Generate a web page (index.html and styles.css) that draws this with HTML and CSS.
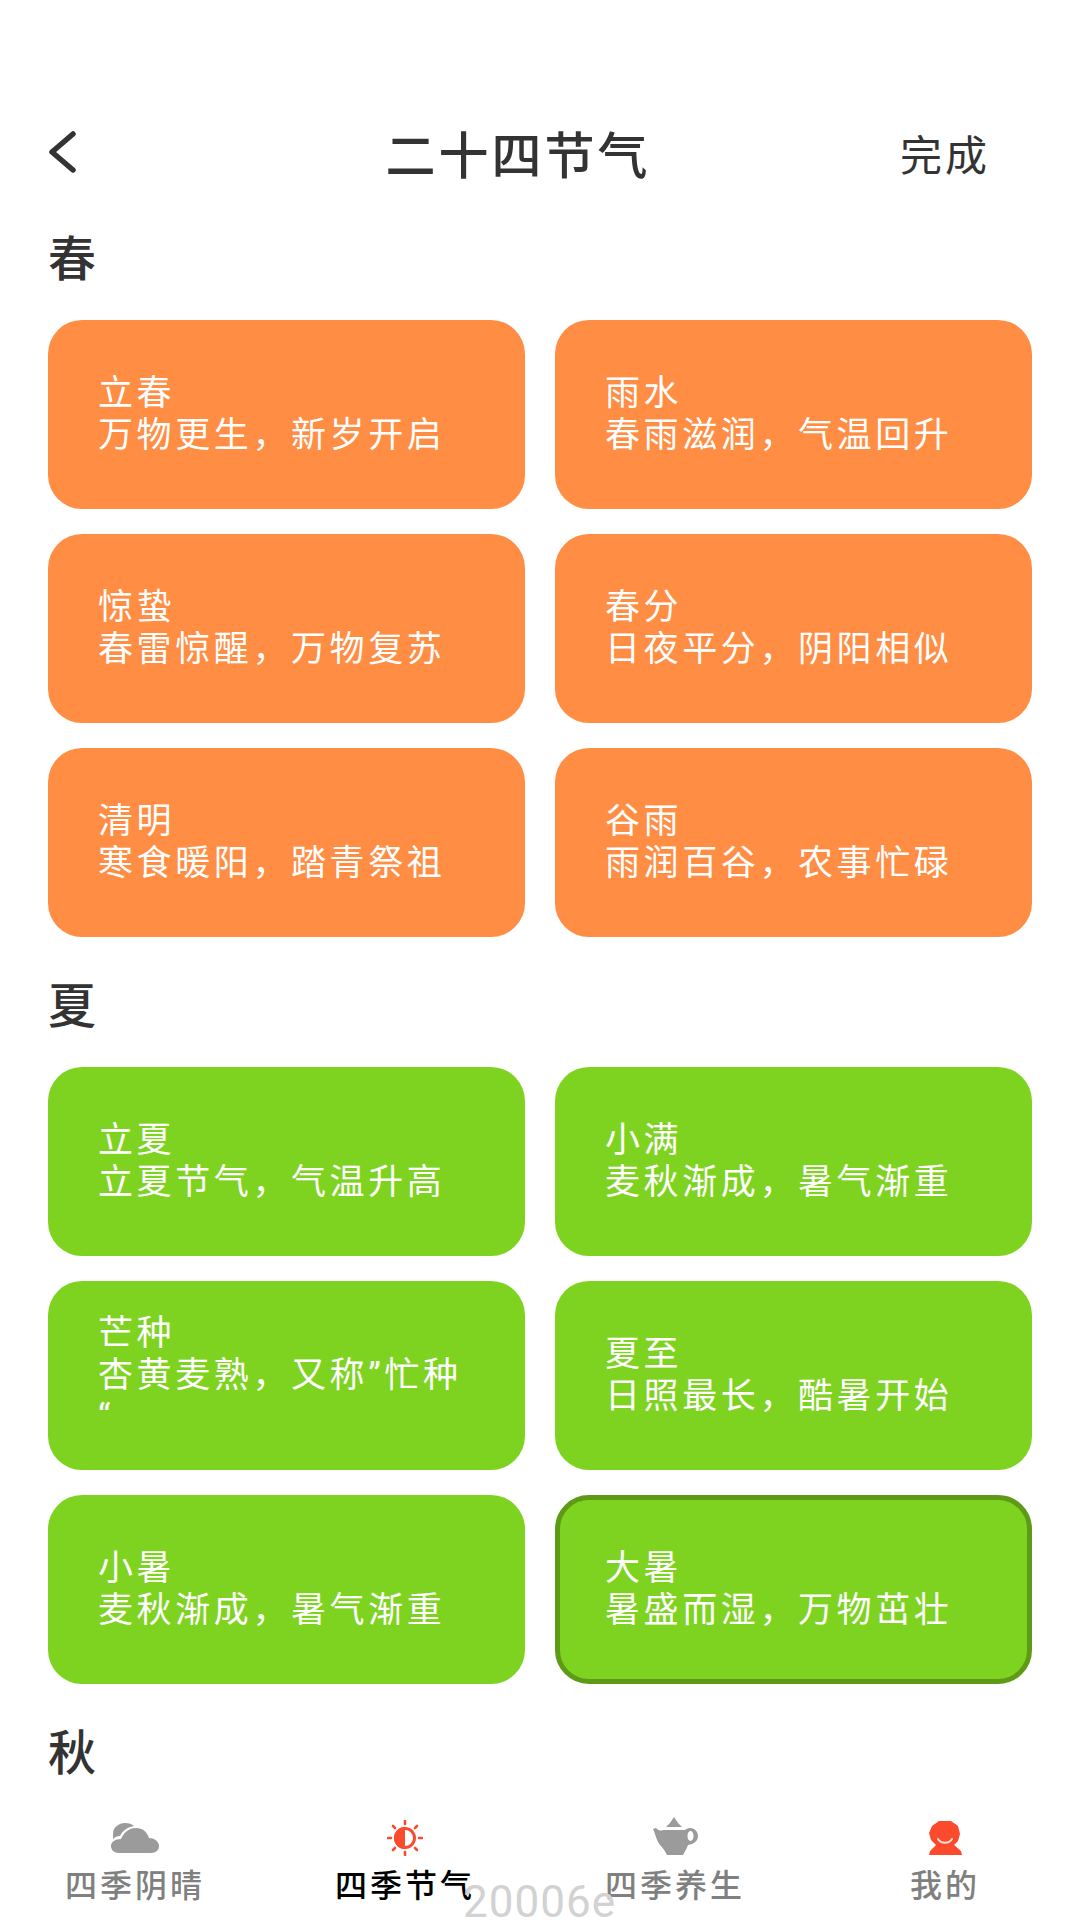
FILE: index.html
```html
<!DOCTYPE html>
<html lang="zh-CN">
<head>
    <meta charset="UTF-8">
    <meta name="viewport" content="width=device-width, initial-scale=1.0">
    <title>二十四节气</title>
    <link rel="stylesheet" href="styles.css">
</head>
<body>
<div class="page">
    <header class="topbar">
        <div class="topbar-left">
            <svg class="back" width="32" height="42" viewBox="0 0 32 42"><path d="M27 3 L6 21 L27 39" fill="none" stroke="#333" stroke-width="5.5" stroke-linecap="round" stroke-linejoin="round"/></svg>
        </div>
        <h1>二十四节气</h1>
        <div class="topbar-right">完成</div>
    </header>

    <main class="content">
        <section class="season">
            <h2>春</h2>
            <div class="grid">
                <div class="card spring"><span>立春</span><span>万物更生，新岁开启</span></div>
                <div class="card spring"><span>雨水</span><span>春雨滋润，气温回升</span></div>
                <div class="card spring"><span>惊蛰</span><span>春雷惊醒，万物复苏</span></div>
                <div class="card spring"><span>春分</span><span>日夜平分，阴阳相似</span></div>
                <div class="card spring"><span>清明</span><span>寒食暖阳，踏青祭祖</span></div>
                <div class="card spring"><span>谷雨</span><span>雨润百谷，农事忙碌</span></div>
            </div>
        </section>
        <section class="season">
            <h2>夏</h2>
            <div class="grid">
                <div class="card summer"><span>立夏</span><span>立夏节气，气温升高</span></div>
                <div class="card summer"><span>小满</span><span>麦秋渐成，暑气渐重</span></div>
                <div class="card summer"><span>芒种</span><span>杏黄麦熟，又称”忙种“</span></div>
                <div class="card summer"><span>夏至</span><span>日照最长，酷暑开始</span></div>
                <div class="card summer"><span>小暑</span><span>麦秋渐成，暑气渐重</span></div>
                <div class="card summer selected"><span>大暑</span><span>暑盛而湿，万物茁壮</span></div>
            </div>
        </section>
        <section class="season">
            <h2>秋</h2>
        </section>
    </main>

    <nav class="tabbar">
        <div class="tab">
            <svg width="50" height="36" viewBox="0 0 50 36">
                <path d="M3 14 C3 7 9 3 15 3 C19 3 22 4 24 6 C18 7 13 10 10 16 C7 16 5 17 3 19 Z" fill="#9b9b9b"/>
                <path d="M9 33 C3 33 1 29 1 26 C1 22 5 19 11 19 C14 12 19 8 26 8 C33 8 37 12 39 18 C45 18 49 22 49 26 C49 30 46 33 41 33 Z" fill="#9b9b9b"/>
            </svg>
            <span>四季阴晴</span>
        </div>
        <div class="tab active">
            <svg width="36" height="36" viewBox="0 0 36 36">
                <circle cx="18" cy="18" r="9.5" fill="#fff" stroke="#fb4a2c" stroke-width="3"/>
                <path d="M18 7 A11 11 0 0 0 18 29 Z" fill="#fb4a2c"/>
                <g stroke="#fb4a2c" stroke-width="2.6" stroke-linecap="round">
                    <path d="M18 1 V4"/><path d="M18 32 V35"/><path d="M1 18 H4"/><path d="M32 18 H35"/>
                    <path d="M6 6 L8 8"/><path d="M28 28 L30 30"/><path d="M6 30 L8 28"/><path d="M28 8 L30 6"/>
                </g>
            </svg>
            <span>四季节气</span>
        </div>
        <div class="tab">
            <svg width="46" height="40" viewBox="0 0 46 40">
                <path d="M18 7 L22 1 L26 7 L30 11 H14 Z" fill="#9b9b9b"/>
                <path d="M1 13 L4 12 C7 15 9 15 11 14 H33 C34 13 36 12 38 12 C43 12 46 16 46 20 C46 25 42 28 36 29 C35 32 33 35 31 39 H15 C13 35 11 32 9 30 C5 26 4 20 1 13 Z" fill="#9b9b9b"/>
                <ellipse cx="38.5" cy="20" rx="3" ry="5" fill="#fff"/>
            </svg>
            <span>四季养生</span>
        </div>
        <div class="tab">
            <svg width="34" height="36" viewBox="0 0 34 36">
                <path d="M11 1 H23 L30 6 L32 14 L30 21 L26 25 L33 31 L34 35 H1 L2 31 L8 25 L3 20 L1 13 L4 6 Z" fill="#fb4a2c"/>
                <path d="M10 19 C13 24 21 24 24 19" fill="none" stroke="#fde0d6" stroke-width="2" stroke-linecap="round"/>
            </svg>
            <span>我的</span>
        </div>
        <div class="watermark">20006e</div>
    </nav>
</div>
</body>
</html>
```

FILE: styles.css
```css
* {
    box-sizing: border-box;
}
body {
    margin: 0;
    background-color: #fff;
    font-family: Roboto, "Noto Sans CJK SC", sans-serif;
    color: #333;
}
.page {
    width: 1080px;
    height: 1920px;
    display: flex;
    flex-direction: column;
    overflow: hidden;
}
.topbar {
    display: grid;
    grid-template-columns: 1fr auto 1fr;
    align-items: center;
    height: 100px;
    margin-top: 102px;
    padding: 0 90px 0 46px;
    flex-shrink: 0;
}
.topbar-left {
    display: flex;
}
.topbar h1 {
    margin: 0;
    font-size: 50px;
    font-weight: 500;
    letter-spacing: 3px;
}
.topbar-right {
    text-align: right;
    font-size: 42px;
    letter-spacing: 3px;
}
.content {
    flex: 1;
    overflow: hidden;
    padding: 23px 48px 0;
}
.season {
    margin-bottom: 35px;
}
.season h2 {
    margin: 0 0 25px;
    height: 70px;
    line-height: 70px;
    font-size: 48px;
    font-weight: 500;
}
.grid {
    display: grid;
    grid-template-columns: 477px 477px;
    grid-auto-rows: 189px;
    gap: 25px 30px;
}
.card {
    display: flex;
    flex-direction: column;
    justify-content: center;
    padding: 0 50px;
    border-radius: 34px;
    color: #fff;
    font-size: 35px;
    line-height: 42px;
    letter-spacing: 3.6px;
}
.spring {
    background-color: #ff8d44;
}
.summer {
    background-color: #7ed321;
}
.selected {
    border: 5px solid #5f9a17;
    padding: 0 45px;
}
.tabbar {
    position: relative;
    display: grid;
    grid-template-columns: repeat(4, 270px);
    height: 130px;
    background-color: #fff;
    flex-shrink: 0;
}
.tab {
    display: flex;
    flex-direction: column;
    align-items: center;
    justify-content: flex-end;
    padding-bottom: 14px;
    gap: 10px;
    font-size: 32px;
    line-height: 40px;
    font-weight: 500;
    letter-spacing: 3px;
    color: #808080;
}
.tab svg {
    display: block;
}
.tab.active {
    color: #000;
}
.watermark {
    position: absolute;
    left: 463px;
    bottom: -8px;
    font-size: 44px;
    line-height: 52px;
    letter-spacing: 1px;
    color: #d2d2d2;
}
```
